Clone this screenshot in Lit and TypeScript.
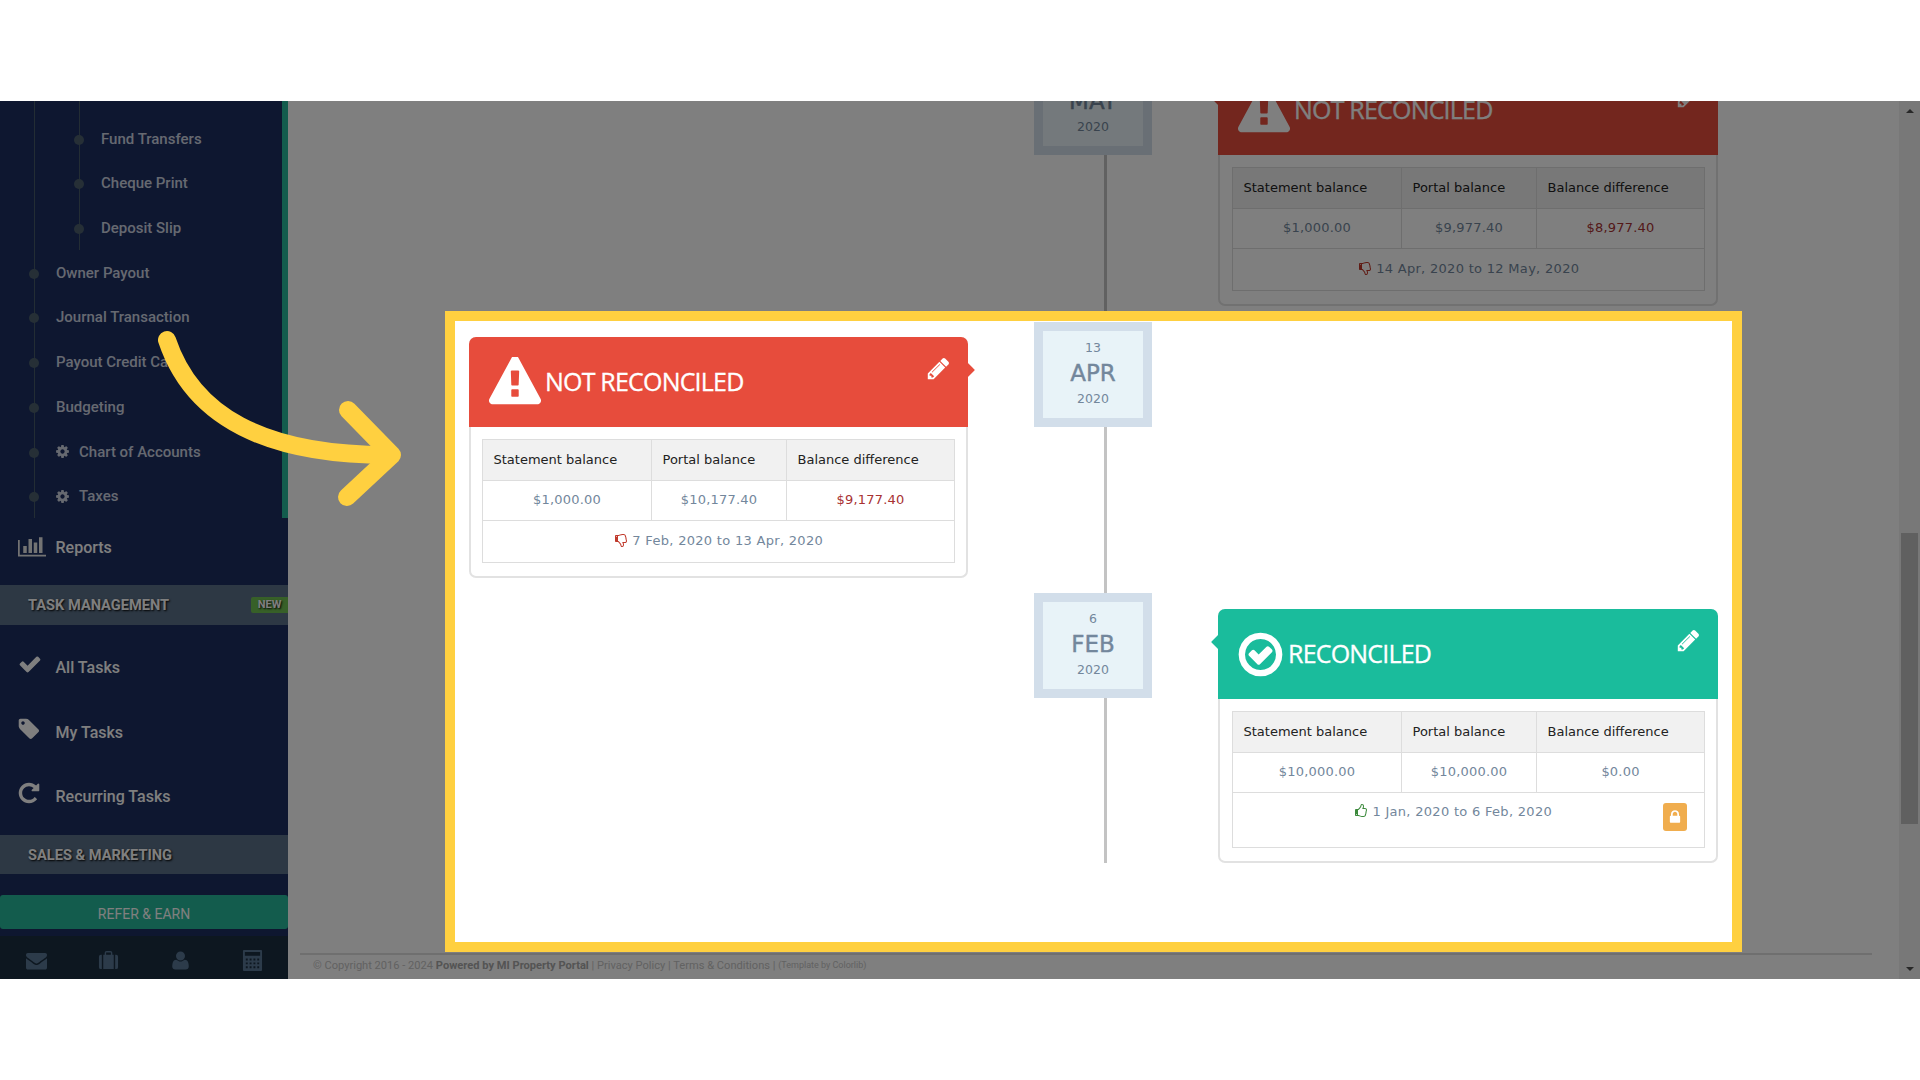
import { LitElement, html, css, svg } from "lit";
import { customElement } from "lit/decorators.js";

const fa = (d: string, vb = "0 0 1792 1792") => html`<svg viewBox=${vb} fill="currentColor"><path d=${d}></path></svg>`;
const P = {
  warn: "M1024 1375v-190q0-14-9.5-23.5t-22.5-9.5h-192q-13 0-22.5 9.5t-9.5 23.5v190q0 14 9.5 23.5t22.5 9.5h192q13 0 22.5-9.5t9.5-23.5zm-2-374l18-459q0-12-10-19-13-11-24-11h-220q-11 0-24 11-10 7-10 21l17 457q0 10 10 16.5t24 6.5h185q14 0 23.5-6.5t10.5-16.5zm-14-934l768 1408q35 63-2 126-17 29-46.5 46t-63.5 17h-1536q-34 0-63.5-17t-46.5-46q-37-63-2-126l768-1408q17-31 47-49t65-18 65 18 47 49z",
  pencil: "M491 1536l91-91-235-235-91 91v107h128v128h107zm523-928q0-22-22-22-10 0-17 7l-542 542q-7 7-7 17 0 22 22 22 10 0 17-7l542-542q7-7 7-17zm-54-192l416 416-832 832h-416v-416zm683 96q0 53-37 90l-166 166-416-416 166-165q36-38 90-38 53 0 91 38l235 234q37 39 37 91z",
  checkO: "M1299 813l-422 422q-19 19-45 19t-45-19l-294-294q-19-19-19-45t19-45l102-102q19-19 45-19t45 19l147 147 275-275q19-19 45-19t45 19l102 102q19 19 19 45t-19 45zm141 83q0-148-73-273t-198-198-273-73-273 73-198 198-73 273 73 273 198 198 273 73 273-73 198-198 73-273zm224 0q0 209-103 385.5t-279.5 279.5-385.5 103-385.5-103-279.5-279.5-103-385.5 103-385.5 279.5-279.5 385.5-103 385.5 103 279.5 279.5 103 385.5z",
  thumb: "M384 1344q0-26-19-45t-45-19-45 19-19 45 19 45 45 19 45-19 19-45zm1152-576q0-51-39-89.5t-89-38.5h-352q0-58 48-159.5t48-160.5q0-98-32-145t-128-47q-26 26-38 85t-30.5 125.5-59.5 109.5q-22 23-77 91-4 5-23 30t-31.5 41-34.5 42.5-40 44-38.5 35.5-40 27-35.5 9h-32v640h32q13 0 31.5 3t33 6.5 38 11 35 11.5 35.5 12.5 29 10.5q211 73 342 73h121q192 0 192-167 0-26-5-56 30-16 47.5-52.5t17.5-73.5-18-69q53-50 53-119 0-25-10-55.5t-25-47.5q32-1 53.5-47t21.5-81zm128-1q0 89-49 163 9 33 9 69 0 77-38 144 3 21 3 43 0 101-60 178 1 139-85 219.5t-227 80.5h-129q-96 0-189.5-22.5t-216.5-65.5q-116-40-138-40h-288q-53 0-90.5-37.5t-37.5-90.5v-640q0-53 37.5-90.5t90.5-37.5h274q36-24 137-155 58-75 107-128 24-25 35.5-85.5t30.5-126.5 62-108q39-37 90-37 84 0 151 32.5t102 101.5 35 186q0 93-48 192h176q104 0 180 76t76 179z",
  lock: "M640 768h512v-192q0-106-75-181t-181-75-181 75-75 181v192zm832 96v576q0 40-28 68t-68 28h-960q-40 0-68-28t-28-68v-576q0-40 28-68t68-28h32v-192q0-184 132-316t316-132 316 132 132 316v192h32q40 0 68 28t28 68z",
  cog: "M1152 896q0-106-75-181t-181-75-181 75-75 181 75 181 181 75 181-75 75-181zm512-109v222q0 12-8 23t-20 13l-185 28q-19 54-39 91 35 50 107 138 10 12 10 25t-9 23q-27 37-99 108t-94 71q-12 0-26-9l-138-108q-44 23-91 38-16 136-29 186-7 28-36 28h-222q-14 0-24.5-8.5t-11.5-21.5l-28-184q-49-16-90-37l-141 107q-10 9-25 9-14 0-25-11-126-114-165-168-7-10-7-23 0-12 8-23 15-21 51-66.5t54-70.5q-27-50-41-99l-183-27q-13-2-21-12.5t-8-23.5v-222q0-12 8-23t19-13l186-28q14-46 39-92-40-57-107-138-10-12-10-24 0-10 9-23 26-36 98.5-107.5t94.5-71.5q13 0 26 10l138 107q44-23 91-38 16-136 29-186 7-28 36-28h222q14 0 24.5 8.5t11.5 21.5l28 184q49 16 90 37l142-107q9-9 24-9 13 0 25 10 129 119 165 170 7 8 7 22 0 12-8 23-15 21-51 66.5t-54 70.5q26 50 41 98l183 28q13 2 21 12.5t8 23.5z",
  bars: "M640 896v512h-256v-512h256zm384-512v1024h-256v-1024h256zm1024 1152v128h-2048v-1216h128v1088h1920zm-640-896v768h-256v-768h256zm384-384v1152h-256v-1152h256z",
  check: "M1671 566q0 40-28 68l-724 724-136 136q-28 28-68 28t-68-28l-136-136-362-362q-28-28-28-68t28-68l136-136q28-28 68-28t68 28l294 295 656-657q28-28 68-28t68 28l136 136q28 28 28 68z",
  tag: "M576 448q0-53-37.5-90.5t-90.5-37.5-90.5 37.5-37.5 90.5 37.5 90.5 90.5 37.5 90.5-37.5 37.5-90.5zm1067 576q0 53-37 90l-491 492q-39 37-91 37-53 0-90-37l-715-716q-38-37-64.5-101t-26.5-117v-416q0-52 38-90t90-38h416q53 0 117 26.5t102 64.5l715 714q37 39 37 91z",
  repeat: "M1664 256v448q0 26-19 45t-45 19h-448q-42 0-59-40-17-39 14-69l138-138q-148-137-349-137-104 0-198.5 40.5t-163.5 109.5-109.5 163.5-40.5 198.5 40.5 198.5 109.5 163.5 163.5 109.5 198.5 40.5q119 0 225-52t179-147q7-10 23-12 15 0 25 9l137 138q9 8 9.5 20.5t-7.5 22.5q-109 132-264 204.5t-327 72.5q-156 0-298-61t-245-164-164-245-61-298 61-298 164-245 245-164 298-61q147 0 284.5 55.5t244.5 156.5l130-129q29-31 70-14 39 17 39 59z",
  mail: "M1792 710v794q0 66-47 113t-113 47h-1472q-66 0-113-47t-47-113v-794q44 49 101 87 362 246 497 345 57 42 92.5 65.5t94.5 48 110 24.5h2q51 0 110-24.5t94.5-48 92.5-65.5q170-123 498-345 57-39 100-87zm0-294q0 79-49 151t-122 123q-376 261-468 325-10 7-42.5 30.5t-54 38-52 32.5-57.5 27-50 9h-2q-23 0-50-9t-57.5-27-52-32.5-54-38-42.5-30.5q-91-64-262-182.5t-205-142.5q-62-42-117-115.5t-55-136.5q0-78 41.5-130t118.5-52h1472q65 0 112.5 47t47.5 113z",
  user: "M1600 1405q0 120-73 189.5t-194 69.5h-874q-121 0-194-69.5t-73-189.5q0-53 3.5-103.5t14-109 26.5-108.5 43-97.5 62-81 85.5-53.5 111.5-20q9 0 42 21.5t74.5 48 108 48 133.5 21.5 133.5-21.5 108-48 74.5-48 42-21.5q61 0 111.5 20t85.5 53.5 62 81 43 97.5 26.5 108.5 14 109 3.5 103.5zm-320-893q0 159-112.5 271.5t-271.5 112.5-271.5-112.5-112.5-271.5 112.5-271.5 271.5-112.5 271.5 112.5 112.5 271.5z",
};

interface Entry {
  day: string; mon: string; year: string;
  ok: boolean; side: "l" | "r";
  stmt: string; portal: string; diff: string; range: string; lock?: boolean;
}

const entries: Record<string, Entry> = {
  may: { day: "12", mon: "MAY", year: "2020", ok: false, side: "r", stmt: "$1,000.00", portal: "$9,977.40", diff: "$8,977.40", range: "14 Apr, 2020 to 12 May, 2020" },
  apr: { day: "13", mon: "APR", year: "2020", ok: false, side: "l", stmt: "$1,000.00", portal: "$10,177.40", diff: "$9,177.40", range: "7 Feb, 2020 to 13 Apr, 2020" },
  feb: { day: "6", mon: "FEB", year: "2020", ok: true, side: "r", stmt: "$10,000.00", portal: "$10,000.00", diff: "$0.00", range: "1 Jan, 2020 to 6 Feb, 2020", lock: true },
};

const card = (e: Entry) => html`
  <div class="card ${e.side === "l" ? "col-l" : "col-r"}">
    <div class="head ${e.ok ? "good" : "bad"}">
      ${e.ok
        ? html`<span class="ic-ok">${fa(P.checkO)}</span>`
        : html`<span class="ic-warn"><svg viewBox="0 50 1792 1640" preserveAspectRatio="none" fill="currentColor"><path d=${P.warn}></path></svg></span>`}
      <span class="title">${e.ok ? "RECONCILED" : "NOT RECONCILED"}</span>
      <span class="pencil">${fa(P.pencil)}</span>
    </div>
    <table>
      <colgroup><col class="c1" /><col class="c2" /><col class="c3" /></colgroup>
      <tr><th>Statement balance</th><th>Portal balance</th><th>Balance difference</th></tr>
      <tr><td class="val">${e.stmt}</td><td class="val">${e.portal}</td><td class="val ${e.ok ? "" : "neg"}">${e.diff}</td></tr>
      <tr>
        <td colspan="3" class="range">
          ${e.lock ? html`<span class="lock">${fa(P.lock)}</span>` : ""}
          <span class="th ${e.ok ? "up" : "down"}">${fa(P.thumb)}</span> ${e.range}
        </td>
      </tr>
    </table>
  </div>`;

const row = (e: Entry, cls: string) => html`
  <div class="row ${cls}">
    ${card(e)}
    <div class="date-col">
      <div class="date">
        <span class="d">${e.day}</span>
        <span class="m">${e.mon}</span>
        <span class="y">${e.year}</span>
      </div>
      <div class="line"></div>
    </div>
  </div>`;

const subItem = (t: string) => html`<div class="item sub-item">${t}</div>`;
const item = (t: string, cog = false) =>
  html`<div class="item">${cog ? html`<span class="cog">${fa(P.cog)}</span>` : ""}${t}</div>`;

@customElement("app-root")
export class AppRoot extends LitElement {
  static styles = css`
    :host { display: block; width: 1920px; height: 1080px; background: #fff; position: relative; overflow: hidden; font-family: "DejaVu Sans", sans-serif; }
    * { box-sizing: border-box; }
    svg { display: block; width: 100%; height: 100%; }
    .strip { height: 101px; background: #fff; }
    .main { height: 878px; position: relative; display: flex; background: #fff; overflow: hidden; }

    .side { width: 288px; flex: none; background: #1c2e60; display: flex; flex-direction: column; font-family: Roboto, sans-serif; }
    .tree { position: relative; height: 417px; border-right: 6px solid #26b99a; }
    .tree::before { content: ""; position: absolute; left: 34px; top: 0; bottom: 0; width: 1px; background: #465a68; }
    .sub { position: relative; padding-top: 15.4px; }
    .sub::before { content: ""; position: absolute; left: 79px; top: 0; bottom: 0; width: 1px; background: #465a68; }
    .item { position: relative; height: 44.7px; display: flex; align-items: center; padding-left: 56px; font-size: 15px; font-weight: 500; color: #ccd3e0; }
    .item::before { content: ""; position: absolute; left: 29px; top: calc(50% - 4px); width: 10px; height: 10px; border-radius: 50%; background: #4c5f6c; }
    .sub-item { padding-left: 101px; }
    .sub-item::before { left: 74px; }
    .cog { width: 15px; height: 15px; margin: 0 9px 0 -1px; }
    .top { display: flex; align-items: center; color: #fff; font-size: 16px; font-weight: 500; padding-left: 55.5px; position: relative; }
    .top .ti { position: absolute; color: #fff; }
    .reports { height: 60px; }
    .reports .ti { left: 18px; top: 14px; width: 28px; height: 28px; color: #e6e6e6; }
    .band { background: #5a7088; color: #fff; font-size: 14.6px; font-weight: 700; display: flex; align-items: center; justify-content: space-between; padding-left: 28px; text-shadow: 1px 1px 2px #000; }
    .band.t { height: 40px; margin-top: 7px; margin-bottom: 10.5px; }
    .band.s { height: 39px; margin-top: 6.5px; }
    .new { width: 37px; height: 16px; background: #6fc050; border-radius: 2px 0 0 2px; font-size: 11px; display: flex; align-items: center; justify-content: center; }
    .task { height: 64.5px; }
    .task .ti { left: 18px; top: 17px; width: 24px; height: 24px; }
    .task.alt .ti { left: 16.5px; }
    .refer { margin-top: 21px; height: 34px; background: #26b99a; border-radius: 3px; color: #fff; font-size: 14px; display: flex; align-items: center; justify-content: center; padding-top: 4px; }
    .bar { margin-top: 7px; height: 43px; background: #1a2e40; display: grid; grid-template-columns: repeat(4, 72px); align-items: center; justify-items: center; color: #587694; padding-top: 6px; }
    .bar span { display: block; width: 21px; height: 21px; }

    .content { flex: 1; min-width: 0; display: flex; flex-direction: column; padding-left: 12px; padding-right: 27px; }
    .bg-row { margin-top: -51px; margin-left: 169px; height: 261px; flex: none; }
    .foot { margin-top: auto; height: 26px; border-top: 2px solid #dedede; padding: 0 0 4px 13px; font-family: Roboto, sans-serif; font-size: 11.1px; color: #c4c4c4; display: flex; align-items: center; white-space: pre; }
    .foot b { color: #a8a8a8; font-weight: 700; }
    .foot small { font-size: 9px; }
    .scroll { width: 21px; flex: none; background: #f1f1f1; position: relative; display: flex; flex-direction: column; align-items: center; justify-content: space-between; padding: 8px 0; }
    .tri { width: 0; height: 0; border-left: 4.5px solid transparent; border-right: 4.5px solid transparent; }
    .tri.u { border-bottom: 4.5px solid #505050; }
    .tri.d { border-top: 4.5px solid #505050; }
    .thumb { position: absolute; left: 2px; right: 2px; top: 432px; height: 291px; background: #c1c1c1; }

    .dim { position: absolute; inset: 0; background: rgba(0, 0, 0, 0.5); }
    .spot { position: absolute; left: 445px; top: 210px; width: 1297px; height: 641px; border: 10px solid #ffd040; background: #fff; padding: 1px 0 0 14px; }

    .row { display: grid; grid-template-columns: 499px 66px 118px 66px 500px; }
    .row.r1 { height: 271px; }
    .row.r2 { height: 269px; }
    .col-l { grid-column: 1; }
    .col-r { grid-column: 5; }
    .date-col { grid-column: 3; grid-row: 1; display: flex; flex-direction: column; height: 100%; }
    .date { height: 105px; border: 9px solid #d2deea; background: #e8f3f8; display: flex; flex-direction: column; align-items: center; color: #73879c; flex: none; }
    .date span { display: block; text-align: center; }
    .date .d { font-size: 12.5px; line-height: 16px; margin-top: 8.5px; }
    .date .m { font-size: 23px; line-height: 28px; margin-top: 3.5px; -webkit-text-stroke: 0.4px #73879c; }
    .date .y { font-size: 12.5px; line-height: 16px; margin-top: 4px; }
    .line { width: 3px; flex: 1; margin-left: 70px; background: #c3c3c3; }

    .card { grid-row: 1; margin-top: 15px; align-self: start; border: 1px solid #e2e2e2; border-width: 0 2px 2px 2px; border-radius: 7px; background: #fff; padding-bottom: 13px; position: relative; z-index: 0; }
    .col-r.card { margin-top: 16px; }
    .bg-row .col-r.card { margin-top: 15px; }
    .head { height: 90px; margin: 0 -2px; border-radius: 7px 7px 0 0; display: flex; align-items: center; color: #fff; position: relative; }
    .head.bad { background: #e74c3c; padding-left: 19.5px; }
    .head.good { background: #1abc9c; padding-left: 17px; }
    .head::after { content: ""; position: absolute; top: 26px; width: 14px; height: 14px; transform: rotate(45deg); background: inherit; z-index: -1; }
    .col-l .head::after { right: -4px; }
    .col-r .head::after { left: -4px; }
    .ic-warn { width: 52px; height: 48px; flex: none; margin-top: -2px; }
    .ic-ok { width: 51px; height: 51px; flex: none; }
    .title { font-family: "Open Sans", sans-serif; font-size: 25px; letter-spacing: -0.8px; margin: -2px 0 0 4.5px; white-space: nowrap; -webkit-text-stroke: 0.3px #fff; }
    .good .title { margin-left: 2px; }
    .pencil { width: 25px; height: 25px; margin: -28px 17px 0 auto; flex: none; }

    table { border-collapse: collapse; table-layout: fixed; width: 472px; margin: 12px 0 0 11px; font-size: 13px; color: #73879c; }
    .col-r table { width: 472px; margin-left: 12px; }
    .c1 { width: 169px; } .c2 { width: 135px; } .c3 { width: 168px; }
    th, td { border: 1px solid #dddddd; padding: 10px; line-height: 20px; }
    th { background: #f1f1f1; color: #222; font-weight: 400; text-align: left; height: 41px; padding: 9px 10px 10px 10.5px; white-space: nowrap; }
    td { text-align: center; height: 40px; padding: 9px 10px 10px; }
    .val { letter-spacing: 0.2px; }
    .neg { color: #a83232; }
    .range { padding-top: 9px; height: 42px; letter-spacing: 0.3px; }
    .th { display: inline-block; width: 14px; height: 14px; vertical-align: -2px; }
    .th.down { color: #c0392b; transform: scaleY(-1); }
    .th.up { color: #3c8a3c; }
    .lock { float: right; width: 24px; height: 28px; background: #f0ad4e; border-radius: 3px; color: #fff; margin: 1px 7px 6px 0; padding: 6px 4px; }
    .arrow { position: absolute; left: 0; top: 0; width: 1920px; height: 1080px; pointer-events: none; }
  `;

  render() {
    return html`
      <div class="strip"></div>
      <div class="main">
        <aside class="side">
          <div class="tree">
            <div class="sub">${subItem("Fund Transfers")}${subItem("Cheque Print")}${subItem("Deposit Slip")}</div>
            ${item("Owner Payout")}${item("Journal Transaction")}${item("Payout Credit Card")}${item("Budgeting")}
            ${item("Chart of Accounts", true)}${item("Taxes", true)}
          </div>
          <div class="top reports"><span class="ti">${fa(P.bars, "0 0 2048 1792")}</span>Reports</div>
          <div class="band t">TASK MANAGEMENT<span class="new">NEW</span></div>
          <div class="top task"><span class="ti">${fa(P.check)}</span>All Tasks</div>
          <div class="top task alt"><span class="ti">${fa(P.tag)}</span>My Tasks</div>
          <div class="top task alt"><span class="ti">${fa(P.repeat)}</span>Recurring Tasks</div>
          <div class="band s">SALES &amp; MARKETING</div>
          <div class="refer">REFER &amp; EARN</div>
          <div class="bar">
            <span>${fa(P.mail)}</span>
            <span>${svg`<svg viewBox="0 0 22 22" fill="currentColor"><path d="M1 7q0-2 2-2h1v15H3q-2 0-2-2zM5.500 5H7V3q0-2 2-2h4q2 0 2 2v2h1.500v15h-11zM8.500 5h5V2.500h-5zM18 5h1q2 0 2 2v11q0 2-2 2h-1z"/></svg>`}</span>
            <span>${fa(P.user)}</span>
            <span>${svg`<svg viewBox="0 0 22 22" fill="currentColor"><path fill-rule="evenodd" d="M2 0h18q1 0 1 1v20q0 1-1 1H2q-1 0-1-1V1q0-1 1-1zM3 2v4h16V2zM4 9v2h2V9zm4 0v2h2V9zm4 0v2h2V9zm4 0v2h2V9zM4 13v2h2v-2zm4 0v2h2v-2zm4 0v2h2v-2zm4 0v2h2v-2zM4 17v2h2v-2zm4 0v2h2v-2zm4 0v2h2v-2zm4 0v2h2v-2z"/></svg>`}</span>
          </div>
        </aside>
        <div class="content">
          ${row(entries.may, "bg-row")}
          <div class="foot">© Copyright 2016 - 2024 <b>Powered by MI Property Portal</b> | Privacy Policy | Terms &amp; Conditions | <small>(Template by Colorlib)</small></div>
        </div>
        <div class="scroll"><i class="tri u"></i><i class="thumb"></i><i class="tri d"></i></div>
        <div class="dim"></div>
        <div class="spot">
          ${row(entries.apr, "r1")}
          ${row(entries.feb, "r2")}
        </div>
      </div>
      <div class="strip"></div>
      <svg class="arrow" viewBox="0 0 1920 1080" fill="none" stroke="#ffd040" stroke-width="18" stroke-linecap="round" stroke-linejoin="round">
        <path d="M167 340C192 415 262 455 388 455"></path>
        <path d="M348 410L392 455L347 497"></path>
      </svg>
    `;
  }
}
